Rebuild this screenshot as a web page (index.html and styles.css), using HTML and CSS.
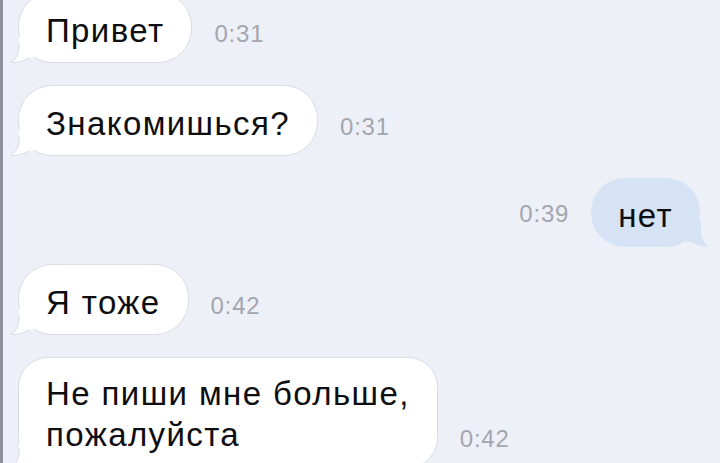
FILE: index.html
```html
<!DOCTYPE html>
<html lang="ru">
<head>
    <meta charset="UTF-8">
    <meta name="viewport" content="width=device-width, initial-scale=1.0">
    <title>Чат</title>
    <link rel="stylesheet" href="styles.css">
</head>
<body>
    <div class="chat">
        <div class="row">
            <div class="bubble in">Привет
                <svg class="tail" width="24" height="26" viewBox="0 0 24 26"><path class="fill" d="M9 0 L9 10 C9 17 6 22 1 25.5 C8 25.5 14 24 19 21 L24 21 L24 0 Z"/><path class="edge" d="M9 6 L9 10 C9 17 6 22 1 25.5 C8 25.5 14 24 19 21"/></svg>
            </div>
            <span class="time">0:31</span>
        </div>

        <div class="row">
            <div class="bubble in">Знакомишься?
                <svg class="tail" width="24" height="26" viewBox="0 0 24 26"><path class="fill" d="M9 0 L9 10 C9 17 6 22 1 25.5 C8 25.5 14 24 19 21 L24 21 L24 0 Z"/><path class="edge" d="M9 6 L9 10 C9 17 6 22 1 25.5 C8 25.5 14 24 19 21"/></svg>
            </div>
            <span class="time">0:31</span>
        </div>

        <div class="row mine">
            <span class="time">0:39</span>
            <div class="bubble out">нет
                <svg class="tail" width="24" height="26" viewBox="0 0 24 26"><path class="fill" d="M15 0 L15 10 C15 17 18 22 23 25.5 C16 25.5 10 24 5 21 L0 21 L0 0 Z"/></svg>
            </div>
        </div>

        <div class="row">
            <div class="bubble in">Я тоже
                <svg class="tail" width="24" height="26" viewBox="0 0 24 26"><path class="fill" d="M9 0 L9 10 C9 17 6 22 1 25.5 C8 25.5 14 24 19 21 L24 21 L24 0 Z"/><path class="edge" d="M9 6 L9 10 C9 17 6 22 1 25.5 C8 25.5 14 24 19 21"/></svg>
            </div>
            <span class="time">0:42</span>
        </div>

        <div class="row">
            <div class="bubble in long">Не пиши мне больше,<br>пожалуйста
                <svg class="tail" width="24" height="26" viewBox="0 0 24 26"><path class="fill" d="M9 0 L9 10 C9 17 6 22 1 25.5 C8 25.5 14 24 19 21 L24 21 L24 0 Z"/><path class="edge" d="M9 6 L9 10 C9 17 6 22 1 25.5 C8 25.5 14 24 19 21"/></svg>
            </div>
            <span class="time">0:42</span>
        </div>
    </div>
</body>
</html>
```

FILE: styles.css
```css
* {
    box-sizing: border-box;
}

body {
    margin: 0;
    height: 463px;
    overflow: hidden;
    background-color: #eef0f8;
    border-left: 3px solid #8d9199;
    font-family: 'Liberation Sans', Arial, sans-serif;
}

.chat {
    display: flex;
    flex-direction: column;
    gap: 22px;
    margin-top: -8px;
    padding: 0 20px 0 15px;
}

.row {
    display: flex;
    align-items: flex-end;
    gap: 22px;
}

.row.mine {
    justify-content: flex-end;
    margin-bottom: -5px;
}

.bubble {
    position: relative;
    padding: 17px 27px 11px;
    min-height: 69px;
    border-radius: 34px;
    font-size: 33px;
    line-height: 41px;
    letter-spacing: 1.4px;
    color: #0e0e10;
}

.bubble.in {
    background-color: #ffffff;
    border: 1px solid #d9dce4;
}

.bubble.out {
    background-color: #d5e3f4;
}

.bubble.long {
    padding-top: 15px;
    padding-bottom: 12px;
    border-radius: 30px;
}

.tail {
    position: absolute;
    bottom: -1px;
    left: -9px;
}

.bubble.out .tail {
    left: auto;
    right: -10px;
    bottom: 0;
}

.bubble.in .fill {
    fill: #ffffff;
}

.bubble.out .fill {
    fill: #d5e3f4;
}

.edge {
    fill: none;
    stroke: #d9dce4;
    stroke-width: 1;
}

.time {
    margin-bottom: 16px;
    font-size: 24px;
    line-height: 26px;
    letter-spacing: 0.8px;
    color: #a3a6ae;
}

.row.mine .time {
    margin-bottom: 20px;
}
```
